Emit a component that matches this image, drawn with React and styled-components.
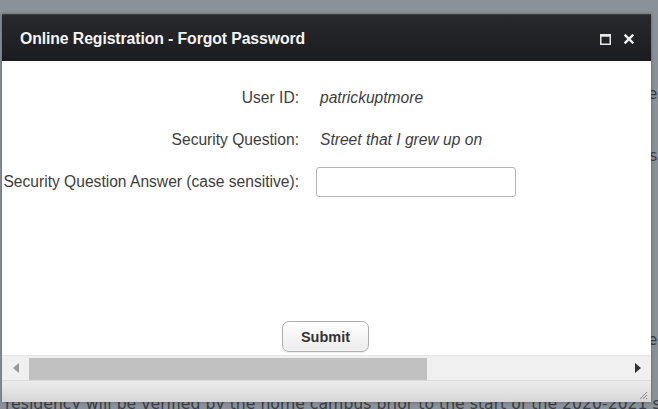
import React from 'react';
import styled, { createGlobalStyle } from 'styled-components';

const Global = createGlobalStyle`
  html, body { margin: 0; padding: 0; }
  body {
    width: 658px;
    height: 409px;
    overflow: hidden;
    background: #8b9199;
    font-family: "Liberation Sans", Arial, sans-serif;
  }
`;

const Page = styled.div`
  position: relative;
  width: 658px;
  height: 409px;
  overflow: hidden;
`;

const Backdrop = styled.div`
  display: flex;
  flex-direction: column;
  color: #3b3e44;
  font-family: "DejaVu Sans", sans-serif;
  font-size: 15.7px;
  line-height: 20px;
`;

const BgLine = styled.div`
  white-space: nowrap;
  text-align: ${p => (p.left ? 'left' : 'right')};
  margin-top: ${p => p.top}px;
  padding-left: ${p => (p.left ? 5 : 0)}px;
  padding-right: ${p => (p.left ? 0 : 0.5)}px;
`;

const Dialog = styled.div`
  position: absolute;
  z-index: 1;
  left: 2px;
  top: 14px;
  width: 649px;
  height: 388px;
  display: flex;
  flex-direction: column;
  background: #fff;
  box-shadow: 0 0 3px rgba(0, 0, 0, 0.35);
`;

const TitleBar = styled.div`
  height: 47px;
  flex: none;
  display: flex;
  align-items: center;
  padding: 0 17px 0 18px;
  background: linear-gradient(#27292c, #1b1c1f);
  border-top: 1px solid #3a3c40;
  box-sizing: border-box;
`;

const Title = styled.div`
  flex: 1;
  color: #f4f4f4;
  font-weight: bold;
  font-size: 15.8px;
  letter-spacing: -0.1px;
  padding-top: 2px;
`;

const TitleButtons = styled.div`
  display: flex;
  align-items: center;
  gap: 13px;
  padding-top: 2px;
`;

const Body = styled.div`
  flex: 1;
  display: flex;
  flex-direction: column;
  align-items: center;
  padding-top: 22px;
  padding-bottom: 3px;
`;

const Form = styled.div`
  align-self: stretch;
  display: grid;
  grid-template-columns: 297px auto;
  grid-auto-rows: 30px;
  column-gap: 17px;
  row-gap: 12px;
  align-items: center;
  flex: 1;
  align-content: start;
`;

const Label = styled.div`
  text-align: right;
  color: #3d3d3d;
  font-size: 15.6px;
  white-space: nowrap;
`;

const Value = styled.div`
  color: #3d3d3d;
  font-size: 15.6px;
  font-style: italic;
  padding-left: 4px;
`;

const TextInput = styled.input`
  width: 200px;
  height: 30px;
  box-sizing: border-box;
  border: 1px solid #b3b3b3;
  border-radius: 3px;
  font-size: 14px;
  font-family: inherit;
  outline: none;
`;

const SubmitButton = styled.button`
  width: 87px;
  height: 31px;
  margin-right: 2px;
  border: 1px solid #aeaeae;
  border-radius: 7px;
  background: linear-gradient(#ffffff, #ececec);
  box-shadow: inset 0 -1px 0 #f8f8f8, 0 1px 1px rgba(0, 0, 0, 0.08);
  font-family: "Liberation Sans", Arial, sans-serif;
  font-weight: bold;
  font-size: 14.5px;
  color: #333;
`;

const ScrollBar = styled.div`
  height: 25px;
  flex: none;
  display: flex;
  align-items: stretch;
  background: #f0f0f0;
  border-top: 1px solid #e6e6e6;
  box-sizing: border-box;
`;

const Arrow = styled.div`
  width: 27px;
  flex: none;
  display: flex;
  align-items: center;
  justify-content: center;
`;

const Track = styled.div`
  flex: 1;
  display: flex;
  padding-top: 2px;
`;

const Thumb = styled.div`
  width: 398px;
  background: #c1c1c1;
`;

const Footer = styled.div`
  height: 22px;
  flex: none;
  display: flex;
  justify-content: flex-end;
  align-items: flex-end;
  padding: 0 3px 2px 0;
  box-sizing: border-box;
  background: linear-gradient(#ececec, #d6d6d6);
  border-top: 1px solid #dadada;
`;

const Icon = ({ children, w = 12, h = 12 }) => (
  <svg width={w} height={h} viewBox={`0 0 ${w} ${h}`}>{children}</svg>
);

export default function App() {
  return (
    <Page>
      <Global />
      <Backdrop>
        <BgLine top={84}>e</BgLine>
        <BgLine top={42}>s</BgLine>
        <BgLine top={164}>e</BgLine>
        <BgLine left top={44}>
          residency will be verified by the home campus prior to the start of the 2020-2021 s
        </BgLine>
      </Backdrop>
      <Dialog>
        <TitleBar>
          <Title>Online Registration - Forgot Password</Title>
          <TitleButtons>
            <Icon w={11} h={11}>
              <rect x="0.75" y="0.75" width="9.5" height="9.5" fill="none" stroke="#e6e6e6" strokeWidth="1.5" />
              <rect x="0.75" y="0.75" width="9.5" height="2" fill="#e6e6e6" />
            </Icon>
            <Icon w={10} h={10}>
              <path d="M1.5 1.5 L8.5 8.5 M8.5 1.5 L1.5 8.5" stroke="#f0f0f0" strokeWidth="2.4" strokeLinecap="square" />
            </Icon>
          </TitleButtons>
        </TitleBar>
        <Body>
          <Form>
            <Label>User ID:</Label>
            <Value>patrickuptmore</Value>
            <Label>Security Question:</Label>
            <Value>Street that I grew up on</Value>
            <Label>Security Question Answer (case sensitive):</Label>
            <div><TextInput type="text" /></div>
          </Form>
          <SubmitButton>Submit</SubmitButton>
        </Body>
        <ScrollBar>
          <Arrow>
            <Icon w={6} h={10}>
              <path d="M6 0 L0 5 L6 10 Z" fill="#9a9a9a" />
            </Icon>
          </Arrow>
          <Track>
            <Thumb />
          </Track>
          <Arrow>
            <Icon w={6} h={10}>
              <path d="M0 0 L6 5 L0 10 Z" fill="#333" />
            </Icon>
          </Arrow>
        </ScrollBar>
        <Footer>
          <Icon w={10} h={10}>
            <path d="M9 2 L2 9 M9 5 L5 9 M9 8 L8 9" stroke="#8a8a8a" strokeWidth="1" />
          </Icon>
        </Footer>
      </Dialog>
    </Page>
  );
}
